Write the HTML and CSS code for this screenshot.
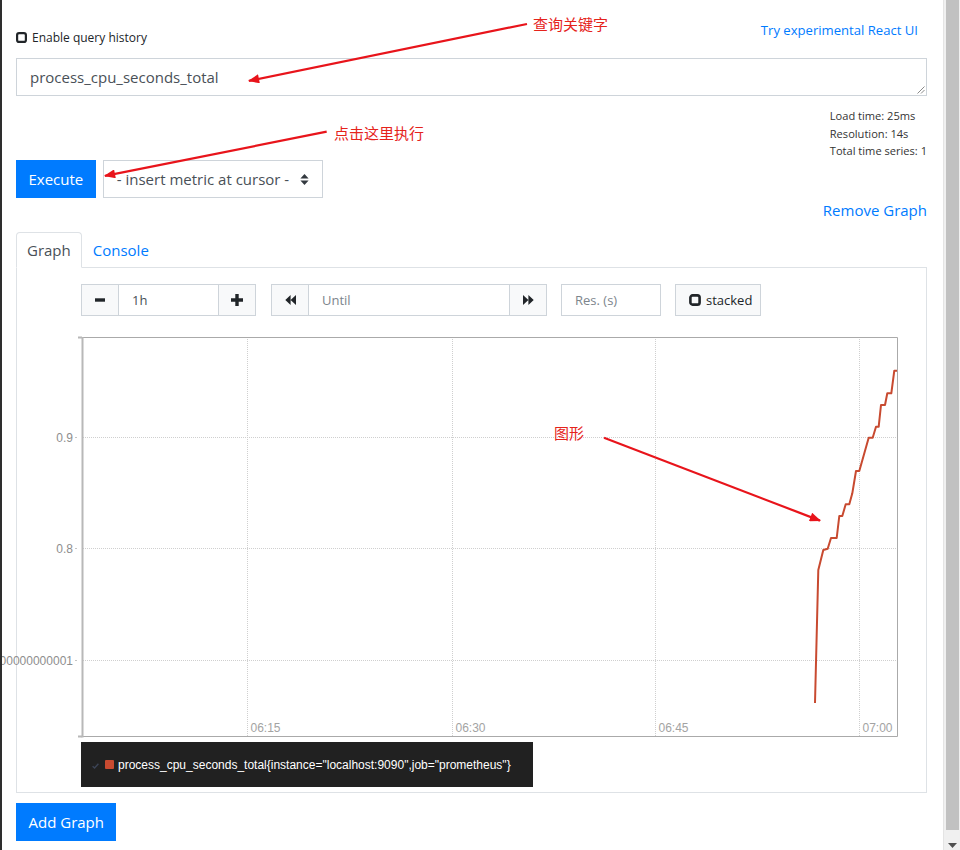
FILE: index.html
```html
<!DOCTYPE html>
<html lang="en">
<head>
<meta charset="utf-8">
<title>Prometheus Time Series Collection and Processing Server</title>
<link rel="stylesheet" href="styles.css">
</head>
<body>
<div class="edge"></div>
<main class="page">
  <div class="top-row">
    <label class="history">
      <svg class="cb" width="11" height="11" viewBox="0 0 11 11"><rect x="1.1" y="1.1" width="8.8" height="8.8" rx="2" fill="none" stroke="#212529" stroke-width="2.2"/></svg>
      <span>Enable query history</span>
    </label>
    <a class="react-link">Try experimental React UI</a>
  </div>

  <div class="expr">
    <span>process_cpu_seconds_total</span>
    <svg class="grip" width="10" height="10" viewBox="0 0 10 10"><path d="M9.5 2.5L2.5 9.5M9.5 6L6 9.5" stroke="#8a8a8a" stroke-width="1"/></svg>
  </div>

  <div class="stats">
    <div>Load time: 25ms</div>
    <div>Resolution: 14s</div>
    <div>Total time series: 1</div>
  </div>

  <div class="exec-row">
    <button class="btn-primary">Execute</button>
    <div class="select">
      <span>- insert metric at cursor -</span>
      <svg width="9" height="11" viewBox="0 0 9 11"><path d="M4.5 0L8.6 4.4H0.4z M4.5 11L0.4 6.6H8.6z" fill="#343a40"/></svg>
    </div>
  </div>

  <div class="remove-row"><a class="link">Remove Graph</a></div>

  <div class="tabs">
    <div class="tab active">Graph</div>
    <div class="tab link">Console</div>
  </div>

  <section class="panel">
    <div class="controls">
      <div class="igroup">
        <div class="ibtn"><svg width="10" height="4" viewBox="0 0 10 4"><rect y="0.3" width="10" height="3.4" fill="#212529"/></svg></div>
        <div class="ifield w99">1h</div>
        <div class="ibtn"><svg width="12" height="12" viewBox="0 0 12 12"><path d="M4.3 0h3.4v4.3H12v3.4H7.7V12H4.3V7.7H0V4.3h4.3z" fill="#212529"/></svg></div>
      </div>
      <div class="igroup">
        <div class="ibtn"><svg width="11" height="10" viewBox="0 0 11 10"><path d="M5.6 0v10L0.3 5zM11 0v10L5.6 5z" fill="#212529"/></svg></div>
        <div class="ifield w200 ph">Until</div>
        <div class="ibtn"><svg width="11" height="10" viewBox="0 0 11 10"><path d="M0 0v10L5.4 5zM5.4 0v10L10.7 5z" fill="#212529"/></svg></div>
      </div>
      <div class="ifield solo ph">Res. (s)</div>
      <div class="stacked">
        <svg width="12" height="12" viewBox="0 0 12 12"><rect x="1.4" y="1.4" width="9.2" height="9.2" rx="2.2" fill="none" stroke="#212529" stroke-width="2.6"/></svg>
        <span>stacked</span>
      </div>
    </div>

    <svg class="chart" width="820" height="406" viewBox="0 0 820 406">
      <g stroke="#cfcfcf" stroke-width="1" stroke-dasharray="1 1">
        <line x1="2" y1="103.5" x2="816" y2="103.5"/>
        <line x1="2" y1="214.5" x2="816" y2="214.5"/>
        <line x1="2" y1="326.5" x2="816" y2="326.5"/>
        <line x1="166.5" y1="3" x2="166.5" y2="402"/>
        <line x1="371.5" y1="3" x2="371.5" y2="402"/>
        <line x1="574.5" y1="3" x2="574.5" y2="402"/>
        <line x1="778.5" y1="3" x2="778.5" y2="402"/>
      </g>
      <path d="M1.5 3.5H816.5V402.5H1.5" fill="none" stroke="#aaaaaa" stroke-width="1"/>
      <line x1="1.5" y1="3" x2="1.5" y2="403.5" stroke="#b8b8b8" stroke-width="2"/>
      <path d="M-3 3.5H1M-3 402.5H1" stroke="#b8b8b8" stroke-width="2"/>
      <path d="M-6 103.5H-4M-6 214.5H-4M-6 326.5H-4" stroke="#c4c4c4" stroke-width="1"/>
      <g class="ylab" text-anchor="end">
        <text x="-8" y="107.5">0.9</text>
        <text x="-8" y="218.5">0.8</text>
        <text x="-8" y="330.5">0.7000000000000001</text>
      </g>
      <g class="xlab">
        <text x="169.5" y="397.5">06:15</text>
        <text x="374.5" y="397.5">06:30</text>
        <text x="577.5" y="397.5">06:45</text>
        <text x="781.5" y="397.5">07:00</text>
      </g>
      <polyline fill="none" stroke="#c84a30" stroke-width="2" stroke-linejoin="round"
        points="734,369 737.3,236 742.3,216 746.7,214.7 750,204 755.7,204 758.3,182 761.3,182 764.7,170.3 768.3,170.3 771.3,159.3 775,137 778.3,137 787.7,103.7 791.7,103.7 795,92.7 797.7,92.7 800,71 804,71 806.3,59.3 810.3,59.3 813.3,36.7 816,36.7"/>
    </svg>

    <div class="legend">
      <svg class="chk" width="7" height="6" viewBox="0 0 7 6"><path d="M0.6 3.2L2.6 5L6.4 0.8" fill="none" stroke="#3c4456" stroke-width="1.4"/></svg>
      <span class="swatch"></span>
      <span class="ltext">process_cpu_seconds_total{instance="localhost:9090",job="prometheus"}</span>
    </div>
  </section>

  <button class="btn-primary add">Add Graph</button>
</main>
<div class="scrollbar">
  <div class="thumb"></div>
  <svg class="sb-arrow" width="9" height="5" viewBox="0 0 9 5"><path d="M0 0h9L4.5 5z" fill="#505050"/></svg>
</div>

<div class="annot">
  <svg class="arrows" width="960" height="850" viewBox="0 0 960 850">
    <defs>
      <marker id="ah" viewBox="0 0 10 8" refX="9" refY="4" markerWidth="12" markerHeight="9" markerUnits="userSpaceOnUse" orient="auto">
        <path d="M0 0L10 4L0 8z" fill="#e8141b"/>
      </marker>
    </defs>
    <g stroke="#e8141b" stroke-width="2.2" marker-end="url(#ah)">
      <line x1="527" y1="24" x2="249" y2="80.8"/>
      <line x1="326.7" y1="131.7" x2="105" y2="175.8"/>
      <line x1="604" y1="437.7" x2="820" y2="520.6"/>
    </g>
  </svg>
  <span class="note n1">查询关键字</span>
  <span class="note n2">点击这里执行</span>
  <span class="note n3">图形</span>
</div>
</body>
</html>
```

FILE: styles.css
```css
* { box-sizing: border-box; }

html, body {
  margin: 0;
  height: 850px;
  overflow: hidden;
  background: #fff;
}

body {
  display: flex;
  position: relative;
  font-family: "Open Sans", "Noto Sans", sans-serif;
  color: #212529;
}

.edge {
  width: 2px;
  flex: none;
  background: #2e2e2e;
}

.page {
  flex: 1;
  min-width: 0;
  overflow: hidden;
  padding: 0 16px 0 14px;
  display: flex;
  flex-direction: column;
}

/* top row */
.top-row {
  display: flex;
  justify-content: space-between;
  align-items: flex-start;
  height: 58px;
}

.history {
  margin-top: 28px;
  display: flex;
  align-items: center;
  gap: 5px;
  font-size: 12px;
  line-height: 19px;
}

.react-link {
  margin-top: 20px;
  margin-right: 9px;
  font-size: 13.1px;
  line-height: 21px;
  color: #007bff;
}

.link { color: #007bff; }

/* expression box */
.expr {
  position: relative;
  height: 38px;
  border: 1px solid #ced4da;
  padding: 0 13px;
  font-size: 15px;
  line-height: 36px;
  color: #495057;
}

.grip {
  position: absolute;
  right: 1px;
  bottom: 1px;
}

.stats {
  align-self: flex-end;
  margin-top: 11px;
  height: 53px;
  font-size: 11.1px;
  line-height: 17.5px;
  color: #333;
  white-space: nowrap;
}

/* execute row */
.exec-row {
  display: flex;
  gap: 7px;
  height: 38px;
}

.btn-primary {
  height: 38px;
  padding: 0 11.5px;
  border: 1px solid #007bff;
  border-radius: 0;
  background: #007bff;
  color: #fff;
  font-family: inherit;
  font-size: 15px;
}

.select {
  width: 220px;
  height: 38px;
  border: 1px solid #ced4da;
  padding: 0 13px;
  display: flex;
  align-items: center;
  justify-content: space-between;
  font-size: 15px;
  color: #495057;
  white-space: nowrap;
}

.remove-row {
  height: 24px;
  line-height: 24px;
  font-size: 15px;
  text-align: right;
}

/* tabs */
.tabs {
  margin-top: 10px;
  height: 36px;
  display: flex;
  border-bottom: 1px solid #dee2e6;
}

.tab {
  height: 36px;
  padding: 0 10px;
  margin-bottom: -1px;
  border: 1px solid transparent;
  border-radius: 4px 4px 0 0;
  font-size: 15px;
  line-height: 34px;
}

.tab.active {
  border-color: #dee2e6 #dee2e6 #fff;
  background: #fff;
  color: #495057;
}

/* panel */
.panel {
  border: 1px solid #dee2e6;
  border-top: none;
  padding: 16px 0 5px 64px;
}

.controls {
  display: flex;
  height: 32px;
  font-size: 13px;
}

.igroup {
  display: flex;
  margin-right: 15px;
}

.igroup + .igroup { margin-right: 14px; }

.ibtn {
  width: 38px;
  height: 32px;
  display: flex;
  align-items: center;
  justify-content: center;
  background: #f8f9fa;
  border: 1px solid #ced4da;
}

.ifield {
  height: 32px;
  padding: 0 13px;
  line-height: 30px;
  border-top: 1px solid #ced4da;
  border-bottom: 1px solid #ced4da;
  color: #495057;
}

.ifield.w99 { width: 99px; }
.ifield.w200 { width: 200px; }

.ifield.solo {
  width: 100px;
  border: 1px solid #ced4da;
  margin-right: 14px;
}

.ph { color: #7d858c; }

.stacked {
  width: 86px;
  height: 32px;
  display: flex;
  align-items: center;
  gap: 5px;
  padding-left: 13px;
  background: #f8f9fa;
  border: 1px solid #ced4da;
}

/* chart */
.chart {
  display: block;
  margin-top: 18px;
  overflow: visible;
}

.ylab, .xlab {
  font-family: "Liberation Sans", Arial, sans-serif;
  font-size: 12px;
}

.ylab { fill: #8e8e8e; }
.xlab { fill: #a3a3a3; }

.legend {
  margin-top: 2px;
  width: 452px;
  height: 45px;
  display: flex;
  align-items: center;
  padding-left: 11px;
  background: #212121;
}

.chk { margin-right: 6px; margin-top: 3px; }

.swatch {
  width: 9px;
  height: 9px;
  border-radius: 1px;
  background: #c84a30;
  margin-right: 4px;
}

.ltext {
  font-family: "Liberation Sans", Arial, sans-serif;
  font-size: 12px;
  color: #fff;
}

.add {
  align-self: flex-start;
  margin-top: 10px;
}

/* fake scrollbar */
.scrollbar {
  width: 17px;
  flex: none;
  background: #f0f0f0;
  border-left: 1px solid #e4e4e4;
  display: flex;
  flex-direction: column;
  align-items: center;
}

.thumb {
  width: 13px;
  height: 830px;
  background: #c1c1c1;
}

.sb-arrow { margin-top: 13px; }

/* annotations overlay */
.annot {
  position: absolute;
  left: 0;
  top: 0;
  width: 960px;
  height: 850px;
  pointer-events: none;
}

.arrows {
  position: absolute;
  left: 0;
  top: 0;
}

.note {
  position: absolute;
  font-family: "Noto Sans CJK SC", sans-serif;
  font-size: 15px;
  line-height: 18px;
  color: #e5231b;
  white-space: nowrap;
}

.n1 { left: 533px; top: 15px; }
.n2 { left: 334px; top: 124px; }
.n3 { left: 554px; top: 424px; }
```
